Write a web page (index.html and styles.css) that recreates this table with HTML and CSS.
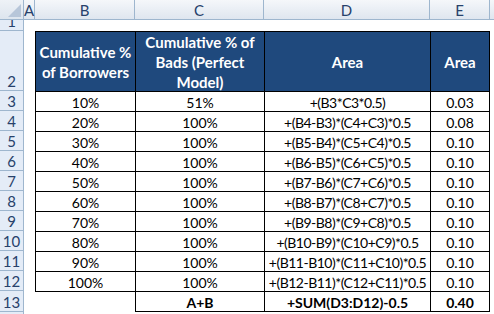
FILE: index.html
```html
<!DOCTYPE html>
<html>
<head>
<meta charset="utf-8">
<link rel="stylesheet" href="styles.css">
</head>
<body>
<div class="sheet">
  <div class="corner"><svg width="13" height="13" viewBox="0 0 13 13"><polygon points="13,0 13,13 0,13" fill="#b7c6d9"/></svg></div>
  <div class="colhdr">A</div>
  <div class="colhdr">B</div>
  <div class="colhdr">C</div>
  <div class="colhdr">D</div>
  <div class="colhdr">E</div>
  <div class="colhdr last"></div>

  <div class="rowhdr">1</div>
  <div class="blank"></div><div class="blank"></div><div class="blank"></div><div class="blank"></div><div class="blank"></div><div class="blank"></div>

  <div class="rowhdr">2</div>
  <div class="blank"></div>
  <div class="cell head">Cumulative %<br>of Borrowers</div>
  <div class="cell head">Cumulative % of<br>Bads (Perfect<br>Model)</div>
  <div class="cell head">Area</div>
  <div class="cell head end">Area</div>
  <div class="blank"></div>

  <div class="rowhdr">3</div><div class="blank"></div>
  <div class="cell">10%</div><div class="cell">51%</div><div class="cell formula">+(B3*C3*0.5)</div><div class="cell end">0.03</div><div class="blank"></div>

  <div class="rowhdr">4</div><div class="blank"></div>
  <div class="cell">20%</div><div class="cell">100%</div><div class="cell formula">+(B4-B3)*(C4+C3)*0.5</div><div class="cell end">0.08</div><div class="blank"></div>

  <div class="rowhdr">5</div><div class="blank"></div>
  <div class="cell">30%</div><div class="cell">100%</div><div class="cell formula">+(B5-B4)*(C5+C4)*0.5</div><div class="cell end">0.10</div><div class="blank"></div>

  <div class="rowhdr">6</div><div class="blank"></div>
  <div class="cell">40%</div><div class="cell">100%</div><div class="cell formula">+(B6-B5)*(C6+C5)*0.5</div><div class="cell end">0.10</div><div class="blank"></div>

  <div class="rowhdr">7</div><div class="blank"></div>
  <div class="cell">50%</div><div class="cell">100%</div><div class="cell formula">+(B7-B6)*(C7+C6)*0.5</div><div class="cell end">0.10</div><div class="blank"></div>

  <div class="rowhdr">8</div><div class="blank"></div>
  <div class="cell">60%</div><div class="cell">100%</div><div class="cell formula">+(B8-B7)*(C8+C7)*0.5</div><div class="cell end">0.10</div><div class="blank"></div>

  <div class="rowhdr">9</div><div class="blank"></div>
  <div class="cell">70%</div><div class="cell">100%</div><div class="cell formula">+(B9-B8)*(C9+C8)*0.5</div><div class="cell end">0.10</div><div class="blank"></div>

  <div class="rowhdr">10</div><div class="blank"></div>
  <div class="cell">80%</div><div class="cell">100%</div><div class="cell formula">+(B10-B9)*(C10+C9)*0.5</div><div class="cell end">0.10</div><div class="blank"></div>

  <div class="rowhdr">11</div><div class="blank"></div>
  <div class="cell">90%</div><div class="cell">100%</div><div class="cell formula">+(B11-B10)*(C11+C10)*0.5</div><div class="cell end">0.10</div><div class="blank"></div>

  <div class="rowhdr">12</div><div class="blank"></div>
  <div class="cell">100%</div><div class="cell">100%</div><div class="cell formula">+(B12-B11)*(C12+C11)*0.5</div><div class="cell end">0.10</div><div class="blank"></div>

  <div class="rowhdr">13</div><div class="blank"></div>
  <div class="cell topline"></div>
  <div class="cell total">A+B</div><div class="cell total">+SUM(D3:D12)-0.5</div><div class="cell total end">0.40</div><div class="blank"></div>

  <div class="rowhdr"></div>
  <div class="blank"></div><div class="blank"></div><div class="blank"></div><div class="blank"></div><div class="blank"></div><div class="blank"></div>
</div>
</body>
</html>
```

FILE: styles.css
```css
html, body {
  margin: 0;
  padding: 0;
  background: #ffffff;
}

.sheet {
  display: grid;
  grid-template-columns: 24px 11px 100px 129px 166px 60px 1fr;
  grid-template-rows: 20px 11px 60px repeat(10, 20px) 21px 20px;
  width: 494px;
  height: 314px;
  overflow: hidden;
  font-family: Lato, "Liberation Sans", sans-serif;
  font-size: 15px;
  color: #000;
}

.sheet > div {
  box-sizing: border-box;
  min-width: 0;
}

.corner {
  background: linear-gradient(#eef2f7, #dde5ee);
  border-right: 1px solid #9eb6ce;
  border-bottom: 1px solid #9eb6ce;
  display: flex;
  align-items: flex-end;
  justify-content: flex-end;
  padding: 0 2px 2px 0;
}

.colhdr {
  background: linear-gradient(#f5f7fa, #dfe6ef);
  border-right: 1px solid #9eb6ce;
  border-bottom: 1px solid #9eb6ce;
  color: #27416b;
  display: flex;
  align-items: center;
  justify-content: center;
  padding-top: 1px;
}

.colhdr.last {
  border-right: none;
}

.rowhdr {
  background: #e4ecf7;
  border-right: 1px solid #9eb6ce;
  border-bottom: 1px solid #9eb6ce;
  color: #27416b;
  display: flex;
  align-items: flex-end;
  justify-content: center;
  line-height: 18px;
  overflow: hidden;
}

.blank {
  background: #ffffff;
}

.cell {
  border-left: 1px solid #000;
  border-top: 1px solid #000;
  display: flex;
  align-items: center;
  justify-content: center;
  text-align: center;
  white-space: nowrap;
  font-size: 14px;
  line-height: 19px;
  padding-top: 1px;
}

.cell.end {
  border-right: 1px solid #000;
}

.formula {
  letter-spacing: -0.5px;
}

.head {
  background: #1f497d;
  color: #ffffff;
  font-weight: bold;
  font-size: 15px;
  line-height: 20px;
  padding-top: 0;
}

.topline {
  border-left: none;
}

.total {
  font-weight: bold;
  border-bottom: 1px solid #000;
}
```
